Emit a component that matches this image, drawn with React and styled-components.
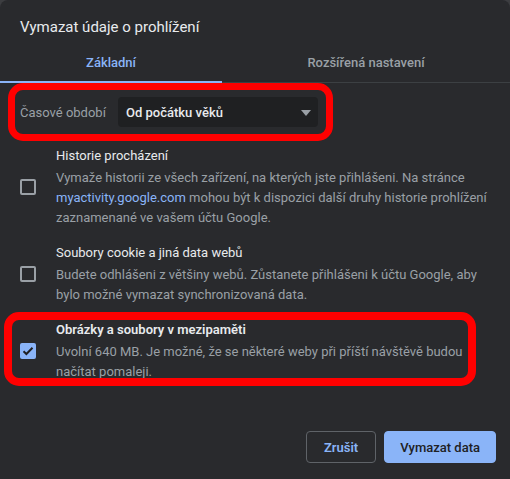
import React, { useState } from "react";
import styled, { createGlobalStyle } from "styled-components";

const GlobalStyle = createGlobalStyle`
	html, body {
		margin: 0;
		padding: 0;
		background: #3c3d40;
	}
	body {
		font-family: "Segoe UI", Roboto, "Open Sans", sans-serif;
	}
`;

const Dialog = styled.div`
	width: 510px;
	height: 479px;
	background: #292a2d;
	border-radius: 8px 8px 0 0;
	display: flex;
	flex-direction: column;
	color: #e8eaed;
	box-sizing: border-box;
	overflow: hidden;
`;
const Title = styled.h1`
	margin: 0;
	padding: 17px 20px 0;
	font-size: 15px;
	font-weight: 400;
	line-height: 20px;
	color: #e8eaed;
`;
const Tabs = styled.div`
	display: flex;
	margin-top: 6px;
	border-bottom: 1px solid #3c4043;
`;
const Tab = styled.div`
	width: ${(p) => (p.$grow ? "auto" : "222px")};
	flex: ${(p) => (p.$grow ? 1 : "none")};
	height: 38px;
	display: flex;
	align-items: center;
	justify-content: center;
	font-size: 13px;
	font-weight: 500;
	color: ${(p) => (p.$active ? "#8ab4f8" : "#9aa0a6")};
	border-bottom: 2px solid ${(p) => (p.$active ? "#8ab4f8" : "transparent")};
	margin-bottom: -1px;
`;
const Body = styled.div`
	display: flex;
	flex-direction: column;
	padding: 0 20px;
	flex: 1;
`;
const TimeRow = styled.div`
	position: relative;
	display: flex;
	align-items: center;
	padding-top: 14px;
	gap: 10px;
`;
const Label = styled.span`
	font-size: 13px;
	color: #9aa0a6;
	width: 88px;
`;
const Select = styled.div`
	width: 200px;
	height: 30px;
	box-sizing: border-box;
	background: #1f2022;
	border-radius: 4px;
	display: flex;
	align-items: center;
	justify-content: space-between;
	padding: 0 7px 0 8px;
	font-size: 13px;
	font-weight: 500;
	color: #e8eaed;
`;
const Arrow = styled.span`
	width: 0;
	height: 0;
	border-left: 5.5px solid transparent;
	border-right: 5.5px solid transparent;
	border-top: 6px solid #9aa0a6;
	margin-top: 1px;
`;
const Options = styled.div`
	display: flex;
	flex-direction: column;
	gap: 15px;
	margin-top: 19px;
`;
const Option = styled.div`
	position: relative;
	display: flex;
	align-items: center;
	gap: 20px;
`;
const Box = styled.span`
	flex: none;
	width: 16px;
	height: 16px;
	box-sizing: border-box;
	border-radius: 2px;
	border: ${(p) => (p.$checked ? "none" : "2px solid #9aa0a6")};
	background: ${(p) => (p.$checked ? "#8ab4f8" : "transparent")};
	display: flex;
	align-items: center;
	justify-content: center;
`;
const Text = styled.div`
	font-size: 13px;
	line-height: 20px;
	width: 434px;
`;
const OptionTitle = styled.div`
	color: #e8eaed;
	margin-bottom: 2px;
	font-weight: ${(p) => (p.$bold ? 600 : 400)};
`;
const Desc = styled.div`
	color: #9aa0a6;
`;
const Link = styled.a`
	color: #8ab4f8;
	text-decoration: none;
`;
const Highlight = styled.div`
	position: absolute;
	border: 7px solid #ff0000;
	border-radius: 15px;
	box-sizing: border-box;
	pointer-events: none;
`;
const Footer = styled.div`
	display: flex;
	justify-content: flex-end;
	gap: 8px;
	padding: 0 14px 16px 0;
`;
const Button = styled.button`
	height: 32px;
	box-sizing: border-box;
	border-radius: 4px;
	font-family: inherit;
	font-size: 13px;
	font-weight: ${(p) => (p.$primary ? 500 : 600)};
	padding: 0 ${(p) => (p.$primary ? "15px" : "17px")};
	cursor: pointer;
	background: ${(p) => (p.$primary ? "#8ab4f8" : "transparent")};
	color: ${(p) => (p.$primary ? "#202124" : "#8ab4f8")};
	border: 1px solid ${(p) => (p.$primary ? "#8ab4f8" : "#5f6368")};
`;

const Check = () => (
	<svg width="12" height="10" viewBox="0 0 12 10">
		<path d="M1.5 5.2 L4.4 8 L10.5 1.8" fill="none" stroke="#202124" strokeWidth="2" />
	</svg>
);

const App = () => {
	const [tab] = useState(0);
	return (
		<Dialog>
			<GlobalStyle />
			<Title>Vymazat údaje o prohlížení</Title>
			<Tabs>
				<Tab $active={tab === 0}>Základní</Tab>
				<Tab $grow $active={tab === 1}>
					Rozšířená nastavení
				</Tab>
			</Tabs>
			<Body>
				<TimeRow>
					<Label>Časové období</Label>
					<Select>
						<span>Od počátku věků</span>
						<Arrow />
					</Select>
					<Highlight style={{ left: -12, top: 0, width: 325, height: 58 }} />
				</TimeRow>
				<Options>
					<Option>
						<Box />
						<Text>
							<OptionTitle>Historie procházení</OptionTitle>
							<Desc>
								Vymaže historii ze všech zařízení, na kterých jste přihlášeni. Na stránce{" "}
								<Link href="#">myactivity.google.com</Link> mohou být k dispozici další druhy
								historie prohlížení zaznamenané ve vašem účtu Google.
							</Desc>
						</Text>
					</Option>
					<Option>
						<Box />
						<Text>
							<OptionTitle>Soubory cookie a jiná data webů</OptionTitle>
							<Desc>
								Budete odhlášeni z většiny webů. Zůstanete přihlášeni k účtu Google, aby bylo
								možné vymazat synchronizovaná data.
							</Desc>
						</Text>
					</Option>
					<Option>
						<Box $checked>
							<Check />
						</Box>
						<Text>
							<OptionTitle $bold>Obrázky a soubory v mezipaměti</OptionTitle>
							<Desc>
								Uvolní 640 MB. Je možné, že se některé weby při příští návštěvě budou načítat
								pomaleji.
							</Desc>
						</Text>
						<Highlight style={{ left: -16, top: -8, width: 472, height: 74, borderWidth: 8 }} />
					</Option>
				</Options>
			</Body>
			<Footer>
				<Button>Zrušit</Button>
				<Button $primary>Vymazat data</Button>
			</Footer>
		</Dialog>
	);
};

export default App;
